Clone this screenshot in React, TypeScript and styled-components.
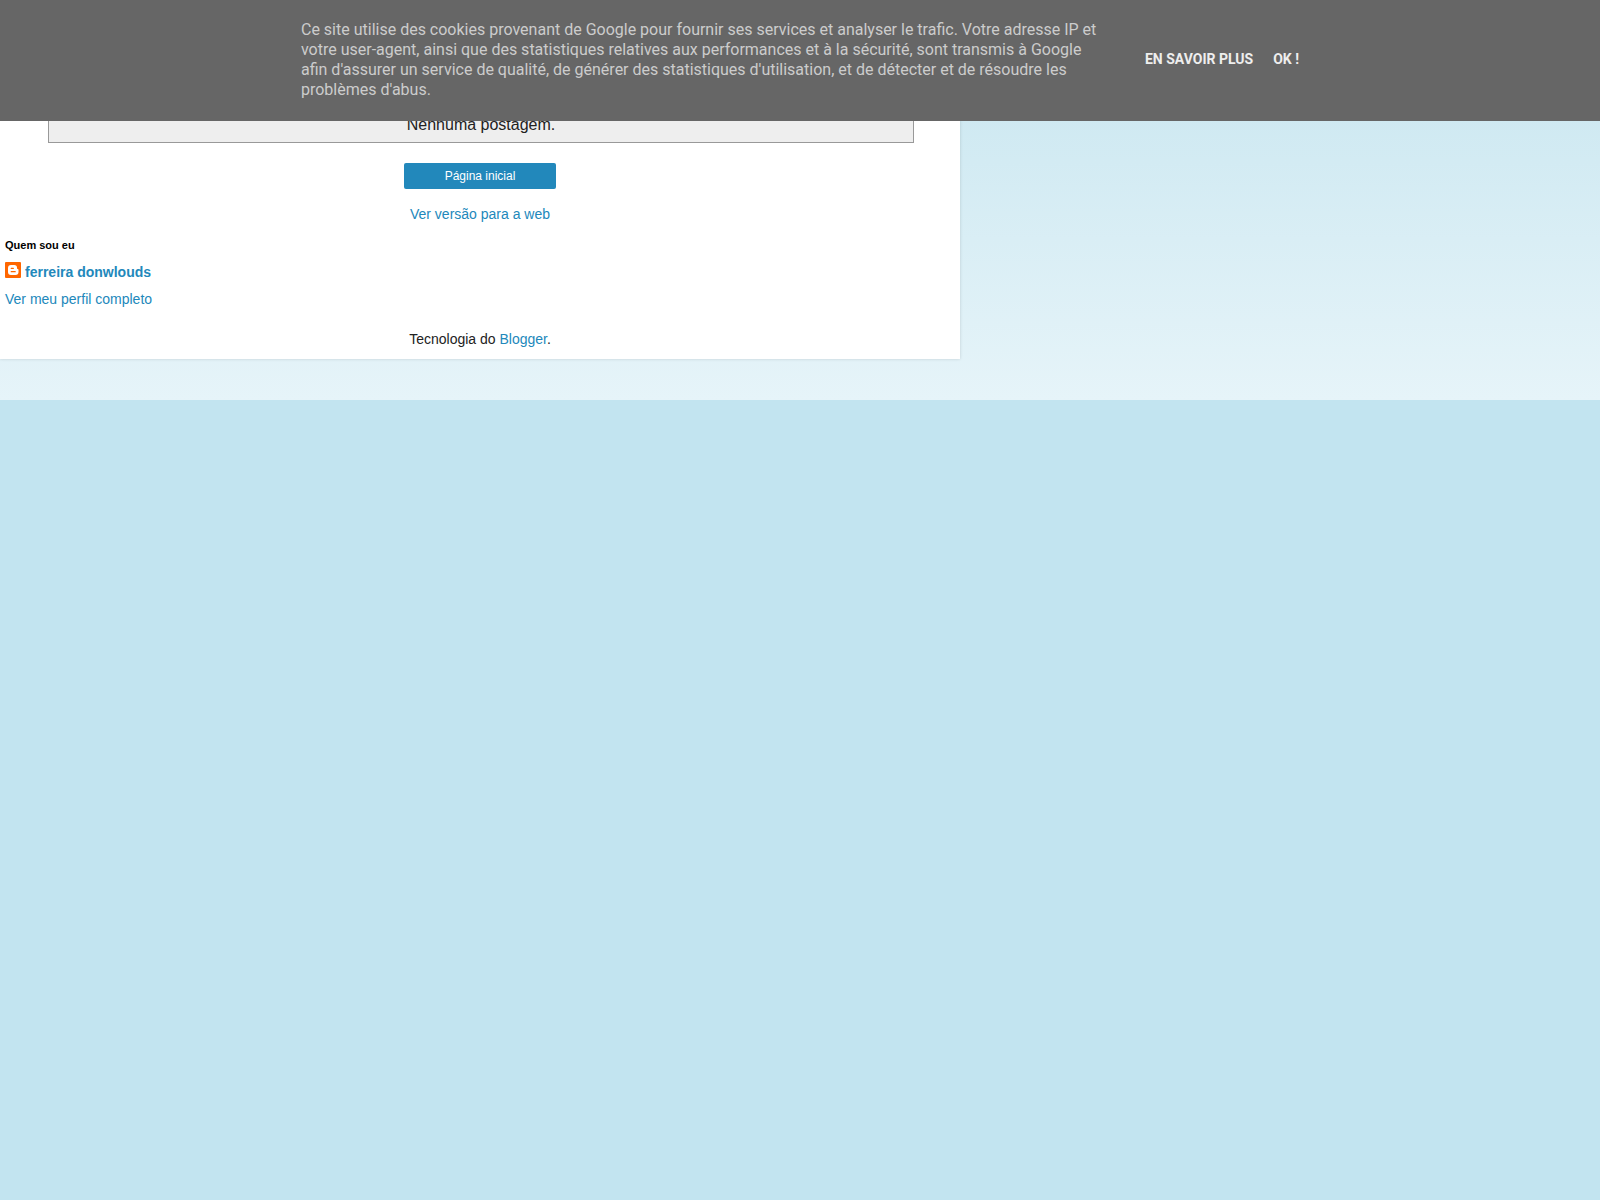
import React from "react";
import styled, { createGlobalStyle } from "styled-components";

const GlobalStyle = createGlobalStyle`
  body {
    margin: 0;
    background: #c2e4f0;
    color: #222222;
    font: 14px/20px "Liberation Sans", Arial, sans-serif;
  }
`;

const Link = styled.a`
  color: #2288bb;
  text-decoration: none;
`;

const CookieBar = styled.section`
  position: fixed;
  top: 0;
  left: 0;
  right: 0;
  z-index: 10;
  display: flex;
  justify-content: center;
  align-items: center;
  box-sizing: border-box;
  padding: 20px 24px 21px;
  background: #666666;
  font-family: Roboto, sans-serif;
`;

const CookieText = styled.p`
  margin: 0;
  max-width: 800px;
  color: #cccccc;
  font-size: 16px;
  line-height: 20px;
`;

const CookieActions = styled.div`
  display: flex;
  gap: 20px;
  margin-left: 44px;
  padding-bottom: 2px;
`;

const CookieLink = styled.a`
  color: #eeeeee;
  font-size: 14px;
  font-weight: 700;
  line-height: 20px;
  text-decoration: none;
  text-transform: uppercase;
  white-space: nowrap;
`;

const Backdrop = styled.div`
  padding: 60px 0 41px;
  background: linear-gradient(#c6e5ef, #e6f4f9);
`;

const Page = styled.div`
  width: 60%;
  background: #ffffff;
  box-shadow: 0 0 3px rgba(0, 0, 0, 0.15);
`;

const StatusMessage = styled.div`
  width: 90%;
  margin-left: 5%;
  padding: 55px 0 7px;
  border: 1px solid #999999;
  border-top: 0;
  background: #eeeeee;
  font-size: 16px;
  text-align: center;
`;

const Pager = styled.nav`
  display: flex;
  flex-direction: column;
  align-items: center;
  gap: 15px;
  padding: 20px 0 15px;
`;

const HomeLink = styled.a`
  box-sizing: border-box;
  width: 152px;
  padding: 3px 8px;
  border-radius: 2px;
  background: #2288bb;
  color: #ffffff;
  font-size: 12px;
  text-align: center;
  text-decoration: none;
`;

const Profile = styled.section`
  display: flex;
  flex-direction: column;
  gap: 7px;
  padding: 0 5px;
`;

const ProfileTitle = styled.h2`
  margin: 0;
  padding-bottom: 4px;
  color: #000000;
  font-size: 11px;
  line-height: 12px;
`;

const AuthorLink = styled(Link)`
  display: flex;
  gap: 4px;
  font-weight: 700;
`;

const Footer = styled.footer`
  padding: 20px 0 10px;
  text-align: center;
`;

const BloggerIcon = () => (
  <svg width="16" height="16" viewBox="0 0 16 16" aria-hidden="true">
    <rect width="16" height="16" rx="1" fill="#ff6600" />
    <path
      fill="#ffffff"
      fillRule="evenodd"
      d="M6 3h3.2a2.8 2.8 0 0 1 2.8 2.8v.5c0 .5.2.7.7.7s.8.3.8.8V10a3 3 0 0 1-3 3H6a3 3 0 0 1-3-3V6a3 3 0 0 1 3-3Zm.2 2.7a.6.6 0 0 0 0 1.2h2.2a.6.6 0 0 0 0-1.2Zm0 3.4a.6.6 0 0 0 0 1.2h4a.6.6 0 0 0 0-1.2Z"
    />
  </svg>
);

export default function App() {
  return (
    <>
      <GlobalStyle />
      <CookieBar>
        <CookieText>
          Ce site utilise des cookies provenant de Google pour fournir ses
          services et analyser le trafic. Votre adresse IP et votre user-agent,
          ainsi que des statistiques relatives aux performances et à la
          sécurité, sont transmis à Google afin d'assurer un service de qualité,
          de générer des statistiques d'utilisation, et de détecter et de
          résoudre les problèmes d'abus.
        </CookieText>
        <CookieActions>
          <CookieLink href="#cookies">En savoir plus</CookieLink>
          <CookieLink href="#ok">OK !</CookieLink>
        </CookieActions>
      </CookieBar>
      <Backdrop>
        <Page>
          <StatusMessage>Nenhuma postagem.</StatusMessage>
          <Pager>
            <HomeLink href="#home">Página inicial</HomeLink>
            <Link href="#web">Ver versão para a web</Link>
          </Pager>
          <Profile>
            <ProfileTitle>Quem sou eu</ProfileTitle>
            <AuthorLink href="#author">
              <BloggerIcon />
              ferreira donwlouds
            </AuthorLink>
            <Link href="#profile">Ver meu perfil completo</Link>
          </Profile>
          <Footer>
            Tecnologia do <Link href="#blogger">Blogger</Link>.
          </Footer>
        </Page>
      </Backdrop>
    </>
  );
}
